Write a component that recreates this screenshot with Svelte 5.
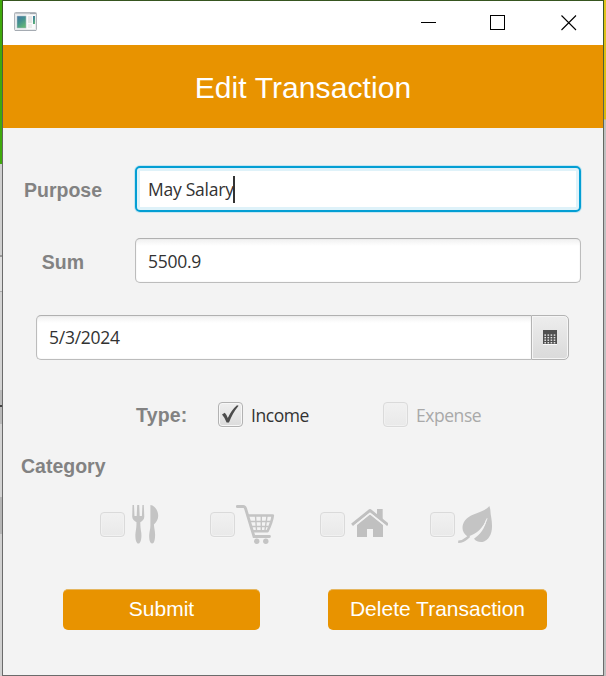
<script>
  let purpose = $state('May Salary');
  let sum = $state('5500.9');
  let date = $state('5/3/2024');
  const categories = ['food', 'shopping', 'home', 'nature'];
  const dots = [0, 1, 2, 3].flatMap((c) => [0, 1, 2, 3].map((r) => [c, r]));
</script>

<div class="desktop">
  <div class="edge left"></div>
  <main class="window">
    <div class="titlebar">
      <svg class="appicon" width="24" height="20" viewBox="0 0 24 20">
        <defs>
          <linearGradient id="pane" x1="0" y1="0" x2="0.6" y2="1">
            <stop offset="0" stop-color="#4673a8" />
            <stop offset="0.5" stop-color="#43918f" />
            <stop offset="1" stop-color="#62b577" />
          </linearGradient>
        </defs>
        <rect x="0.5" y="0.5" width="22" height="18" rx="1" fill="#e9ebed" stroke="#b1b6bb" />
        <path d="M1 1.5h15" stroke="#c3c8cc" />
        <path d="M16 1.5h6" stroke="#a3a9b0" />
        <rect x="2" y="3" width="19" height="14" fill="#fafafa" />
        <rect x="3" y="4" width="9" height="12" fill="url(#pane)" stroke="#a6bdc0" stroke-width=".6" />
        <rect x="14" y="4" width="4" height="7" fill="#e5e5e5" />
        <rect x="14" y="12" width="4" height="4" fill="#ececec" />
        <rect x="19" y="4" width="2" height="8" fill="url(#pane)" />
        <path d="M1 18.5h21" stroke="#a5abb2" />
      </svg>
      <svg class="controls" width="156" height="17" viewBox="0 0 156 17">
        <g fill="none" stroke="#000">
          <path d="M0 8.5h15M69.500 1.500h14v14h-14z" shape-rendering="crispEdges" />
          <path d="M140.500 1.500l14.500 14.500M155 1.500l-14.500 14.500" stroke-width="1.100" />
        </g>
      </svg>
    </div>

    <header>Edit Transaction</header>

    <div class="form">
      <div class="row first">
        <span class="label">Purpose</span>
        <div class="field focused"><span>{purpose}</span><i class="caret"></i></div>
      </div>
      <div class="row second">
        <span class="label">Sum</span>
        <div class="field"><span>{sum}</span></div>
      </div>
      <div class="date">
        <div class="field"><span>{date}</span></div>
        <button class="calendar" aria-label="Choose date">
          <svg width="14" height="15" viewBox="0 0 14 15">
            <path d="M0 0h14v14H0z" fill="#505050" />
            <path d="M0 14.500h14" stroke="#fafafa" />
            {#each dots as [c, r]}
              <rect x={1.4 + c * 3.1} y={4.4 + r * 2.55} width="1.600" height="1.400" fill="#e8e8e8" />
            {/each}
          </svg>
        </button>
      </div>

      <div class="type">
        <span class="label">Type:</span>
        <span class="box on">
          <svg width="17" height="19" viewBox="0 0 17 19">
            <path d="M0 9.600L2.800 7.800Q4.800 10 5.800 13Q9.500 5 15 0.300L16.600 0.700Q10.500 8 7 17.600H4.600Q3 13 0 9.600z" fill="#4b4b4b" />
          </svg>
        </span>
        <span class="text">Income</span>
        <span class="box off expense"></span>
        <span class="text dim">Expense</span>
      </div>
      <div class="category label">Category</div>

      <div class="options">
        {#each categories as name}
          <div class="option">
            <span class="box off"></span>
            <svg class="glyph" width="42" height="42" viewBox="0 0 42 42">
              {#if name === 'food'}
                <path d="M6.500 2h1.500L8.500 13h2.200L11.200 2h2L13.700 13h2.200L16.400 2h1.400L18.300 13.500c0 3-2 4.500-4 5.800c0 4 .4 7.200 1 10.700c.5 4-.3 10.500-2.900 10.500S9 34 9.500 30c.6-3.500 1-6.700 1-10.700c-2-1.300-4.300-2.800-4.300-5.800z" />
                <path d="M24.400 2c5 .8 7.800 6 7.800 11c0 3.700-2 6-4.300 8.500c.2 3.500 1.200 6.500 1.200 10c0 4-.5 9-3 9s-3.100-5-2.900-8.500c.2-3.500 1.200-6 1.200-9.500z" />
              {:else if name === 'shopping'}
                <path d="M1.300 3.500H7.300Q9 3.500 9.700 6L18 33.500H33.500" fill="none" stroke="#c4c4c4" stroke-width="2.800" stroke-linecap="round" />
                <path d="M12 12.500H36.800Q36 19 31.500 28.200H16.500" fill="none" stroke="#c4c4c4" stroke-width="2.600" stroke-linejoin="round" />
                <path d="M14 18.500h20.500M15.500 23.500h17M19.500 13l1 14M25.300 13v14M31 13l-2 14" fill="none" stroke="#c4c4c4" stroke-width="1.400" />
                <circle cx="20.700" cy="38.300" r="2.700" /><circle cx="29.800" cy="38.300" r="2.700" />
              {:else if name === 'home'}
                <path d="M7.200 21L24 7.500L40.800 21" fill="none" stroke="#c0c0c0" stroke-width="3" stroke-linecap="square" stroke-linejoin="round" />
                <path d="M31 6h5.700v11.500L31 12.500zM11 22L24 11.500L37 22V34H27v-8h-6v8H11z" fill="#c0c0c0" />
                <path d="M8.500 22.800L24 10.200L39.500 22.800" fill="none" stroke="#f3f3f3" stroke-width="1.100" />
              {:else}
                <path d="M33.300 3C30 7 24 9 17.500 11.500C9.500 14.500 6.500 20 6.500 25C6.500 28.500 8.500 31.500 11.500 33.500C21 31 27 25 30.500 16C29 26 24 31.500 18 35.800C20 38.500 23.500 39.500 26.500 39C32.500 37.500 36 31 36 24C36.200 17 34.500 12 34.500 9Q34.500 6 33.300 3z" />
                <path d="M2.200 38.700C8 39 10 35.500 13.500 33" fill="none" stroke="#c4c4c4" stroke-width="2.500" />
                <path d="M31 15.500Q27.500 27.500 16.500 34L15 35.300Q27.500 28 31 15.500z" fill="#f3f3f3" stroke="#f3f3f3" stroke-width=".7" />
              {/if}
            </svg>
          </div>
        {/each}
      </div>

      <div class="actions">
        <button class="submit">Submit</button>
        <button class="delete">Delete Transaction</button>
      </div>
    </div>
  </main>
  <div class="edge right"></div>
</div>

<style>
  :global(body) { margin: 0; overflow: hidden; }
  * { box-sizing: border-box; }
  .desktop { display: flex; width: 606px; height: 676px; font-family: 'Liberation Sans', Arial, sans-serif; }
  .edge { width: 2px; flex: none; }
  .left { background: linear-gradient(#3fa90b 0 164px, #cfcfcf 164px 255px, #999 255px 257px, #dedede 257px 291px, #aaa 291px 292px, #d3d3d3 292px 390px, #b9b9b9 390px 405px, #444 405px 407px, #b9b9b9 407px 424px, #d3d3d3 424px 497px, #b5b5b5 497px 534px, #d0d0d0 534px); }
  .right { background: linear-gradient(#e0c51c 0, #d8b90f 119px, #c0c0c0 120px); }
  .window { width: 602px; height: 676px; display: flex; flex-direction: column; background: #f3f3f3; border: 1px solid #6b6b6b; border-image: linear-gradient(#36551f, #6b6b6b 25%) 1; }
  .titlebar { height: 44px; flex: none; display: flex; justify-content: space-between; background: #fff; padding: 11px 26px 0 11px; }
  .controls { margin-top: 2px; }
  header { height: 83px; flex: none; background: #e89300; color: #fff; text-align: center; font-size: 30px; line-height: 85px; letter-spacing: 0.1px; }
  .form { display: flex; flex-direction: column; padding-top: 38px; }
  .label { color: #828282; font-weight: 700; font-size: 19.5px; line-height: 24px; }
  .row { display: flex; align-items: center; }
  .row .label { width: 120px; text-align: center; margin-right: 12px; padding-top: 2px; }
  .row .field { width: 446px; }
  .second { margin-top: 26px; }
  .field { height: 45px; display: flex; align-items: center; padding-left: 12px; border: 1px solid #bcbcbc; border-top-color: #b0b0b0; border-radius: 5px; background: linear-gradient(#f0f0f0, #fff 7px); color: #323232; box-shadow: inset 0 0 1px #ccc; }
  .field, .text { font-family: 'Open Sans', 'Noto Sans', sans-serif; font-size: 17.5px; letter-spacing: -0.25px; line-height: 24px; }
  .focused { height: 46px; border: 2px solid #039ed3; background: #fff; box-shadow: 0 0 0 1px #c5e6f2, inset 0 0 0 3px #dff2f9; padding-left: 11px; }
  .caret { width: 2px; height: 27px; background: #333; margin-left: -1px; }
  .date { display: flex; width: 533px; margin: 32px 0 0 33px; }
  .date .field { width: 495px; border-radius: 5px 0 0 5px; border-right-width: 0; padding-bottom: 1px; }
  .calendar { width: 38px; height: 45px; padding: 0; display: flex; align-items: center; justify-content: center; border: 1px solid #b3b3b3; border-radius: 0 5px 5px 0; background: linear-gradient(#ededed, #dadada); box-shadow: inset 0 0 0 1px #f5f5f5; }
  .type { display: flex; align-items: center; height: 25px; margin-top: 42px; padding-left: 133px; }
  .type .label { width: 82px; letter-spacing: 0.2px; }
  .box { width: 25px; height: 25px; flex: none; display: flex; align-items: center; justify-content: center; border-radius: 4px; }
  .on { border: 1px solid #b2b2b2; background: linear-gradient(#efefef, #dcdcdc); box-shadow: inset 0 0 0 1px #f7f7f7, 0 1px #fafafa; }
  .off { border: 1px solid #dadada; background: linear-gradient(#f1f1f1, #e9e9e9); box-shadow: inset 0 0 0 1px #f1f1f1, 0 1px #f6f6f6; }
  .text { color: #323232; margin-left: 8px; width: 132px; letter-spacing: -0.45px; }
  .dim { color: #a9a9a9; }
  .category { margin: 27px 0 0 18px; }
  .options { display: flex; margin: 25px 0 0 97px; }
  .option { display: flex; align-items: center; width: 110px; height: 43px; }
  .glyph { fill: #c4c4c4; flex: none; align-self: flex-start; margin-left: 1px; }
  .actions { display: flex; margin: 43px 0 0 60px; gap: 68px; }
  .actions button { height: 41px; padding: 0; border: 0; border-top: 1px solid #e5b65f; border-radius: 5px; background: #e89300; color: #fff; font: 21px/36px 'Liberation Sans', Arial, sans-serif; padding-bottom: 2px; }
  .actions .submit { width: 197px; }
  .actions .delete { width: 219px; }
</style>
